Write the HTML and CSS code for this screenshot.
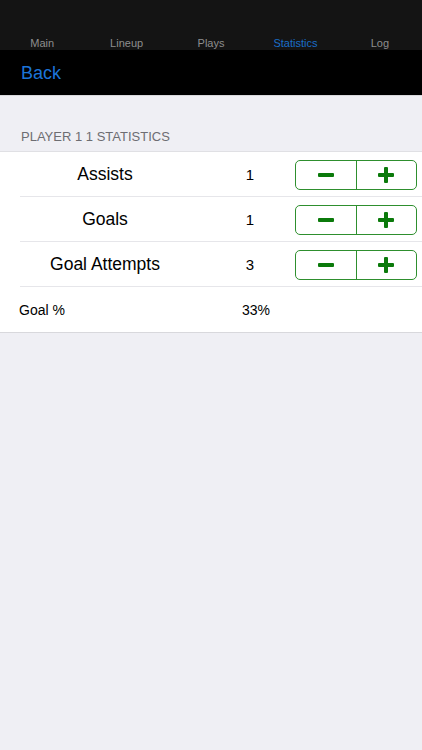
FILE: index.html
```html
<!DOCTYPE html>
<html>
<head>
<meta charset="utf-8">
<link rel="stylesheet" href="styles.css">
</head>
<body>
<div class="tabs">
  <div class="tab">Main</div>
  <div class="tab">Lineup</div>
  <div class="tab">Plays</div>
  <div class="tab active">Statistics</div>
  <div class="tab">Log</div>
</div>
<div class="nav"><span class="back">Back</span></div>
<div class="content">
  <div class="section-title">PLAYER 1 1 STATISTICS</div>
  <div class="table">
    <div class="row">
      <div class="label">Assists</div>
      <div class="value">1</div>
      <div class="stepper">
        <div class="seg"><span class="minus"></span></div>
        <div class="seg"><span class="plus"></span></div>
      </div>
    </div>
    <div class="row">
      <div class="label">Goals</div>
      <div class="value">1</div>
      <div class="stepper">
        <div class="seg"><span class="minus"></span></div>
        <div class="seg"><span class="plus"></span></div>
      </div>
    </div>
    <div class="row">
      <div class="label">Goal Attempts</div>
      <div class="value">3</div>
      <div class="stepper">
        <div class="seg"><span class="minus"></span></div>
        <div class="seg"><span class="plus"></span></div>
      </div>
    </div>
    <div class="row last">
      <div class="label small">Goal %</div>
      <div class="value small">33%</div>
    </div>
  </div>
</div>
</body>
</html>
```
FILE: styles.css
```css
html, body {
  margin: 0;
  padding: 0;
  background: #efeff4;
  font-family: "Liberation Sans", Arial, sans-serif;
  width: 422px;
  height: 750px;
  overflow: hidden;
}
.tabs {
  background: #141414;
  height: 50px;
  display: flex;
  align-items: flex-end;
}
.tab {
  flex: 1;
  text-align: center;
  color: #8e8e8e;
  font-size: 11px;
  padding-bottom: 1px;
}
.tab.active {
  color: #1a6ec8;
}
.nav {
  background: #000;
  height: 46px;
  display: flex;
  align-items: center;
  padding-left: 21px;
  padding-top: 2px;
  border-bottom: 1px solid #d8d8dc;
  box-sizing: border-box;
}
.back {
  color: #1c74d8;
  font-size: 18px;
}
.content {
  padding-top: 33px;
}
.section-title {
  color: #6d6d72;
  font-size: 13px;
  padding-left: 21px;
  height: 22px;
}
.table {
  background: #fff;
  border-top: 1px solid #e0e0e4;
  border-bottom: 1px solid #d8d8dc;
}
.row {
  display: flex;
  align-items: center;
  height: 45px;
  position: relative;
}
.row::after {
  content: "";
  position: absolute;
  left: 20px;
  right: 0;
  bottom: 0;
  height: 1px;
  background: #e6e6ea;
}
.row.last::after {
  display: none;
}
.label {
  width: 210px;
  text-align: center;
  font-size: 17.5px;
  color: #000;
}
.label.small {
  font-size: 14px;
  text-align: left;
  padding-left: 19px;
  box-sizing: border-box;
}
.value {
  width: 80px;
  text-align: center;
  font-size: 15px;
  color: #000;
}
.value.small {
  font-size: 14px;
  padding-left: 12px;
  box-sizing: border-box;
}
.stepper {
  display: flex;
  width: 122px;
  height: 30px;
  border: 1px solid #2e8f2e;
  border-radius: 5px;
  box-sizing: border-box;
  margin-left: 5px;
}
.seg {
  flex: 1;
  display: flex;
  align-items: center;
  justify-content: center;
}
.seg + .seg {
  border-left: 1px solid #2e8f2e;
}
.minus {
  display: block;
  width: 16px;
  height: 4px;
  background: #0b7a0b;
  border-radius: 1px;
}
.plus {
  display: block;
  width: 16px;
  height: 16px;
  position: relative;
}
.plus::before, .plus::after {
  content: "";
  position: absolute;
  background: #0b7a0b;
  border-radius: 1px;
}
.plus::before {
  left: 0;
  top: 6px;
  width: 16px;
  height: 4px;
}
.plus::after {
  left: 6px;
  top: 0;
  width: 4px;
  height: 16px;
}
```
